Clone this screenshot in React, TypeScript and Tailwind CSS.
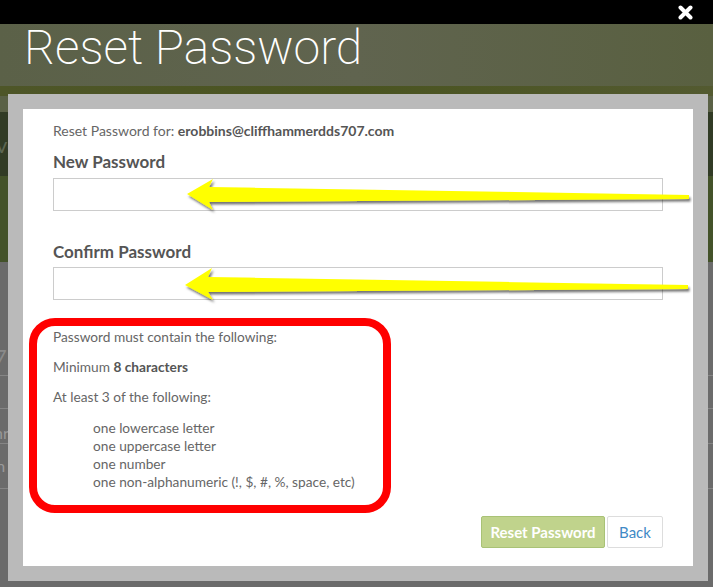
import React from 'react';

const body = { fontFamily: 'Lato, "Open Sans", sans-serif' };

function CloseIcon() {
  return (
    <svg width="15" height="15" viewBox="0 0 15 15">
      <path d="M2.5 2.5 L12.5 12.5 M12.5 2.5 L2.5 12.5" stroke="#fff" strokeWidth="4" strokeLinecap="round" />
    </svg>
  );
}

// yellow annotation arrows drawn over the form
function Arrows() {
  const a1 = 'M187,194 L213,179 L209,187 L689,195 L689,199 L209,202 L213,210 Z';
  const a2 = 'M185,285 L212,268 L208,277 L688,285 L688,289 L208,292 L213,300 Z';
  return (
    <svg className="pointer-events-none absolute inset-0" width="713" height="587" viewBox="0 0 713 587">
      <defs>
        <filter id="arrowShadow" x="-5%" y="-50%" width="110%" height="200%">
          <feDropShadow dx="1.5" dy="2.5" stdDeviation="1.2" floodColor="#000" floodOpacity="0.55" />
        </filter>
      </defs>
      <path d={a1} fill="#ffff00" filter="url(#arrowShadow)" />
      <path d={a2} fill="#ffff00" filter="url(#arrowShadow)" />
    </svg>
  );
}

function Requirements() {
  const items = [
    'one lowercase letter',
    'one uppercase letter',
    'one number',
    'one non-alphanumeric (!, $, #, %, space, etc)',
  ];
  return (
    <div className="mt-[18px] ml-[-24px] w-[362px] rounded-[26px] border-[8px] border-[#ff0000] pl-4 pt-[2px] pb-[14px] text-[13.7px] leading-[18px] text-[#666]">
      <p>Password must contain the following:</p>
      <p className="mt-3">
        Minimum <span className="font-bold text-[#555]">8 characters</span>
      </p>
      <p className="mt-3">At least 3 of the following:</p>
      <ul className="mt-[13px] pl-10">
        {items.map((item) => (
          <li key={item}>{item}</li>
        ))}
      </ul>
    </div>
  );
}

export default function App() {
  return (
    <div className="relative h-[587px] w-[713px] overflow-hidden bg-[#6b6b6b]" style={body}>
      {/* dimmed page behind the dialog */}
      <div className="h-6 bg-black" />
      <div className="h-[62px] bg-gradient-to-r from-[#5b6148] via-[#60644f] to-[#596040]" />
      <div className="h-[10px] bg-gradient-to-r from-[#4e5628] via-[#4a5420] to-[#535a30]" />
      <div className="h-[16px] bg-[#5a6146]" />
      <div className="flex h-[64px] items-center bg-[#313b25] text-[22px] text-[#5d6652]">
        <span className="ml-[-4px]">ve</span>
      </div>
      <div className="h-[86px] bg-[#435229]" />
      <div className="flex h-[113px] items-end pb-[6px] text-[22px] leading-6 text-[#8a8a8a]">
        <span className="ml-[-6px]">7</span>
      </div>
      <div className="h-px bg-[#858585]" />
      <div className="h-[32px]" />
      <div className="h-px bg-[#858585]" />
      <div className="flex h-[34px] items-end text-[16px] leading-5 text-[#999]">
        <span className="ml-[-6px]">nr</span>
      </div>
      <div className="h-px bg-[#858585]" />
      <div className="flex h-[44px] items-center text-[16px] leading-5 text-[#999]">
        <span className="ml-[-8px]">m</span>
      </div>
      <div className="h-px bg-[#858585]" />

      {/* lightbox */}
      <div className="absolute inset-0">
        <div className="flex h-6 items-center justify-end pr-[20px]">
          <CloseIcon />
        </div>
        <h1
          className="ml-[24px] mt-[-4px] text-[48px] font-extralight leading-[56px] text-white"
          style={{ fontFamily: 'Roboto, sans-serif' }}
        >
          Reset Password
        </h1>
        <div className="absolute left-2 top-[94px] h-[487px] w-[700px] bg-[#bababa] p-[15px]">
          <div className="flex h-full flex-col bg-white px-[30px] pt-[13px]">
            <p className="text-[14px] leading-[18px] text-[#666]">
              Reset Password for: <span className="font-bold text-[#555]">erobbins@cliffhammerdds707.com</span>
            </p>
            <label className="mt-[12px] block text-[17px] font-bold leading-5 text-[#555]">New Password</label>
            <input type="password" className="mt-[6px] block h-[33px] w-full border border-[#cccccc] outline-none" />
            <label className="mt-[31px] block text-[17px] font-bold leading-5 text-[#555]">Confirm Password</label>
            <input type="password" className="mt-[5px] block h-[33px] w-full border border-[#cccccc] outline-none" />
            <Requirements />
            <div className="mt-[3px] flex justify-end gap-[2px]">
              <button className="h-[32px] w-[124px] rounded-[2px] border border-[#a9c276] bg-[#c0d38c] text-[15px] font-bold text-white">
                Reset Password
              </button>
              <button className="h-[32px] w-[56px] rounded-[2px] border border-[#dddddd] bg-white text-[15px] text-[#3f8ac6]">
                Back
              </button>
            </div>
          </div>
        </div>
        <Arrows />
      </div>
    </div>
  );
}
